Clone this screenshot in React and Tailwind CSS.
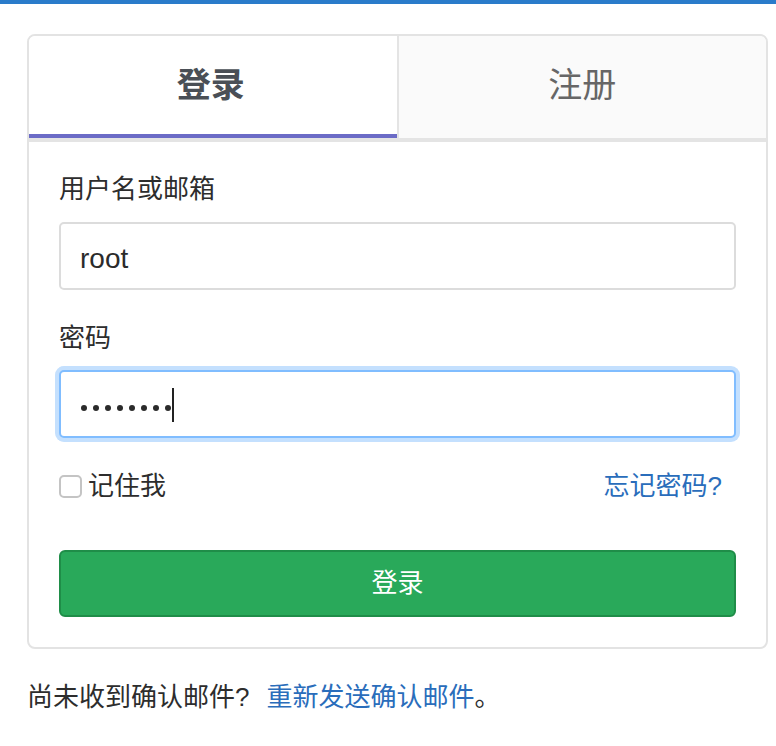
import React from 'react';

const font = { fontFamily: '"Liberation Sans", "Noto Sans CJK SC", sans-serif' };

function LoginPanel() {
  return (
    <div className="px-[30px] pt-[29px] pb-[30px]">
      {/* Username */}
      <label className="block text-[26px] leading-[36px] text-[#2d2d2d] mb-[15px]">用户名或邮箱</label>
      <input
        type="text"
        readOnly
        value="root"
        className="block w-full h-[68px] pl-[19px] pr-[20px] pt-[5px] text-[28px] text-[#2b2b2b] bg-white border-2 border-[#dcdcdc] rounded-[5px] outline-none"
      />

      {/* Password */}
      <label className="block text-[26px] leading-[36px] text-[#2d2d2d] mt-[30px] mb-[14px]">密码</label>
      <div className="flex items-center h-[68px] pl-[20px] pr-[22px] bg-white border-2 border-[#80bdff] rounded-[5px] shadow-[0_0_0_4px_#c4e0fe]">
        <div className="flex items-center gap-[6px] mt-[7px]">
          {[0, 1, 2, 3, 4, 5, 6, 7].map((i) => (
            <span key={i} className="block w-[6px] h-[6px] rounded-full bg-[#2b2b2b]" />
          ))}
        </div>
        <span className="block w-[2px] h-[34px] bg-[#222] ml-[1px] mt-[2px]" />
      </div>

      {/* Remember / forgot */}
      <div className="flex items-center justify-between mt-[30px] h-[36px]">
        <label className="flex items-center">
          <span className="block w-[23px] h-[23px] border-2 border-[#c4c4c4] rounded-[5px] bg-white" />
          <span className="ml-[6px] text-[26px] leading-[36px] text-[#2d2d2d]">记住我</span>
        </label>
        <a href="#" className="text-[26px] leading-[36px] text-[#2a6dbb] mr-[14px]">忘记密码?</a>
      </div>

      {/* Submit */}
      <button className="block w-full h-[67px] mt-[46px] bg-[#29a95a] border-2 border-[#1f8d48] rounded-[6px] text-white text-[26px]">
        登录
      </button>
    </div>
  );
}

export default function App() {
  return (
    <div className="min-h-[746px] bg-white" style={font}>
      <div className="h-[4px] bg-[#2a7bca]" />

      <div className="ml-[27px] mr-[8px] mt-[30px]">
        <div className="border-2 border-[#e3e3e3] rounded-[8px] overflow-hidden">
          {/* Tabs */}
          <div className="flex border-b-4 border-[#e4e4e4]">
            <div className="flex-1 h-[102px] flex items-center justify-center bg-white border-b-4 border-[#6b6bc6]">
              <span className="text-[34px] font-bold text-[#4a4f56] mr-[4px]">登录</span>
            </div>
            <div className="flex-1 h-[102px] flex items-center justify-center bg-[#fafafa] border-l-2 border-[#e4e4e4]">
              <span className="text-[34px] text-[#666] pb-[4px]">注册</span>
            </div>
          </div>

          <LoginPanel />
        </div>

        <p className="mt-[30px] text-[26px] leading-[36px] text-[#2d2d2d]">
          尚未收到确认邮件?
          <a href="#" className="ml-[17px] text-[#2a6dbb]">重新发送确认邮件</a>
          。
        </p>
      </div>
    </div>
  );
}
